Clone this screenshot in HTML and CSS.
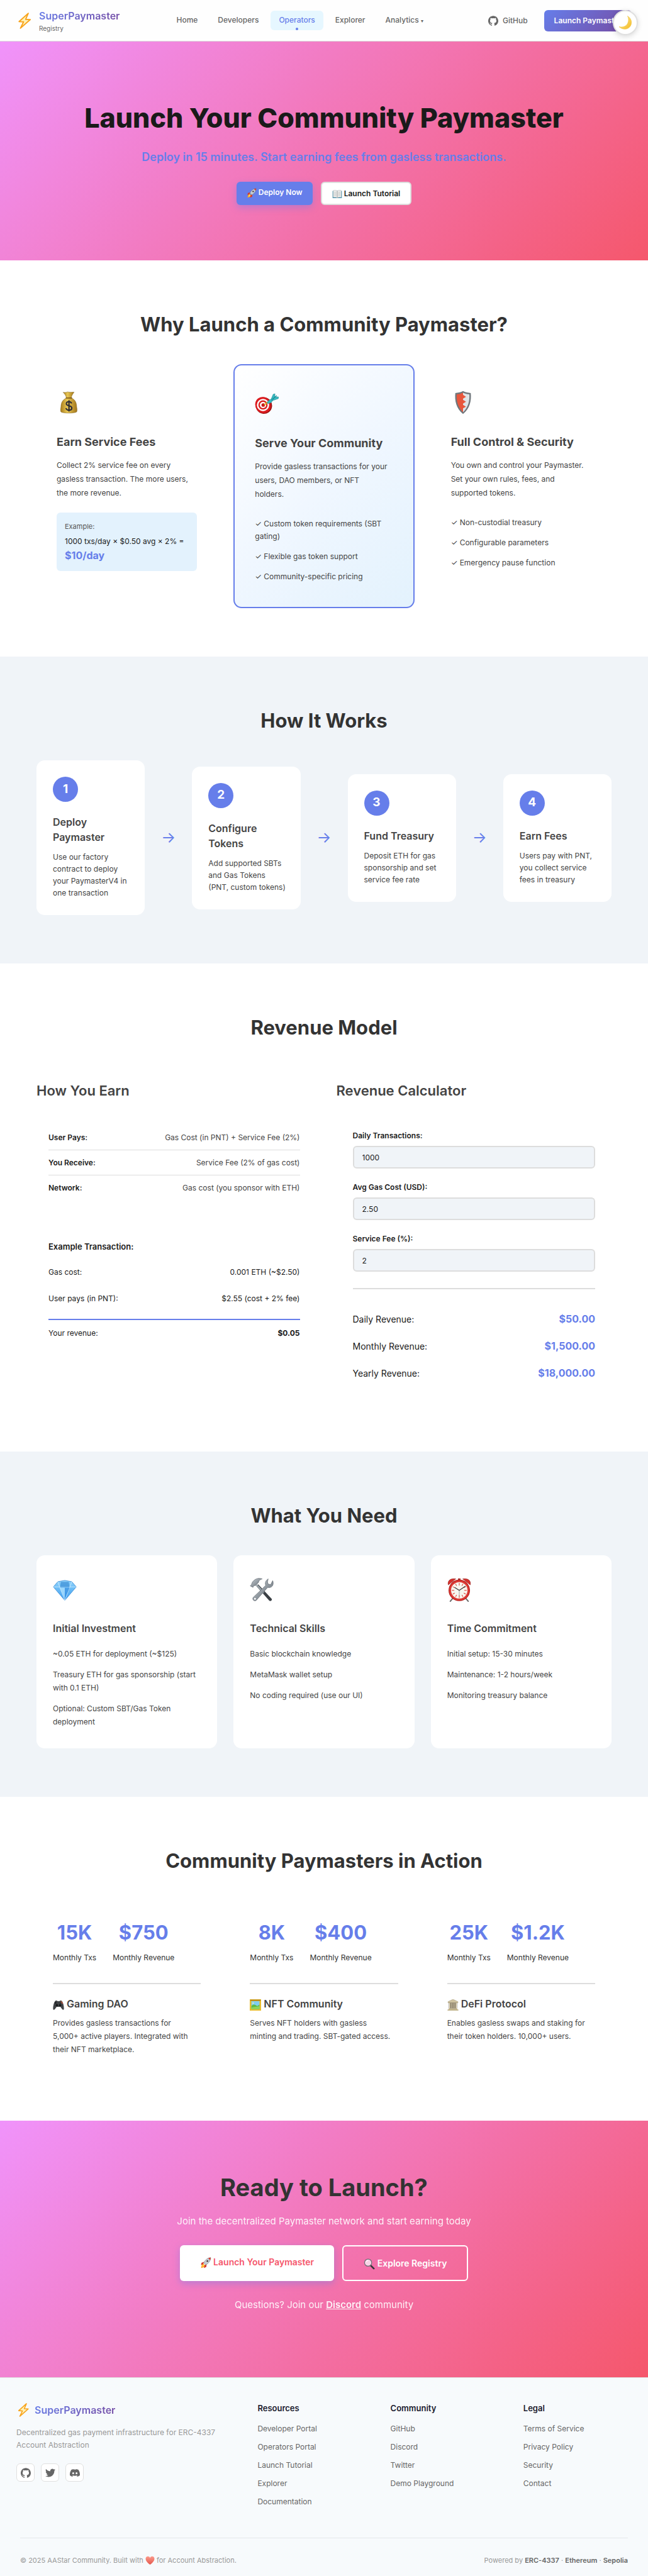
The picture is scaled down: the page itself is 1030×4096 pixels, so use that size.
FILE: index.html
```html
<!DOCTYPE html>
<html lang="en">
<head>
<meta charset="utf-8">
<meta name="viewport" content="width=device-width, initial-scale=1">
<title>SuperPaymaster Registry - Operators</title>
<link rel="stylesheet" href="styles.css">
</head>
<body>
<svg class="sprite" aria-hidden="true">
  <defs>
    <linearGradient id="g-bag" x1="0" y1="0" x2="1" y2="0"><stop offset="0" stop-color="#a87c1c"/><stop offset=".4" stop-color="#e8c653"/><stop offset="1" stop-color="#a3761a"/></linearGradient>
    <linearGradient id="g-steel" x1="0" y1="0" x2="1" y2="1"><stop offset="0" stop-color="#c9d0d6"/><stop offset="1" stop-color="#5d666e"/></linearGradient>
    <linearGradient id="g-gem" x1="0" y1="0" x2="0" y2="1"><stop offset="0" stop-color="#8fd3fb"/><stop offset="1" stop-color="#3d9df0"/></linearGradient>
    <linearGradient id="g-moon" x1="0" y1="0" x2="1" y2="1"><stop offset="0" stop-color="#fdf0a8"/><stop offset="1" stop-color="#f5b91f"/></linearGradient>
    <linearGradient id="g-heart" x1="0" y1="0" x2="0" y2="1"><stop offset="0" stop-color="#fb9a8c"/><stop offset="1" stop-color="#e4574c"/></linearGradient>
  </defs>
  <symbol id="bolt" viewBox="0 0 24 24"><path d="M17.5 1 4 13.2l6.6.4L6 23 20.500 10.200l-6.800-.3z" fill="#fff3b8" stroke="#f8a31b" stroke-width="1.700" stroke-linejoin="round"/></symbol>
  <symbol id="github" viewBox="0 0 24 24"><path fill="currentColor" d="M12 .297c-6.63 0-12 5.373-12 12 0 5.303 3.438 9.8 8.205 11.385.6.113.82-.258.82-.577 0-.285-.01-1.04-.015-2.04-3.338.724-4.042-1.61-4.042-1.61C4.422 18.07 3.633 17.7 3.633 17.7c-1.087-.744.084-.729.084-.729 1.205.084 1.838 1.236 1.838 1.236 1.07 1.835 2.809 1.305 3.495.998.108-.776.417-1.305.76-1.605-2.665-.3-5.466-1.332-5.466-5.93 0-1.31.465-2.38 1.235-3.22-.135-.303-.54-1.523.105-3.176 0 0 1.005-.322 3.3 1.23.96-.267 1.98-.399 3-.405 1.02.006 2.04.138 3 .405 2.28-1.552 3.285-1.23 3.285-1.23.645 1.653.24 2.873.12 3.176.765.84 1.23 1.91 1.23 3.22 0 4.61-2.805 5.625-5.475 5.92.42.36.81 1.096.81 2.22 0 1.606-.015 2.896-.015 3.286 0 .315.21.69.825.57C20.565 22.092 24 17.592 24 12.297c0-6.627-5.373-12-12-12"/></symbol>
  <symbol id="twitter" viewBox="0 0 24 24"><path fill="currentColor" d="M23.953 4.57a10 10 0 01-2.825.775 4.958 4.958 0 002.163-2.723c-.951.555-2.005.959-3.127 1.184a4.92 4.92 0 00-8.384 4.482C7.69 8.095 4.067 6.13 1.64 3.162a4.822 4.822 0 00-.666 2.475c0 1.71.87 3.213 2.188 4.096a4.904 4.904 0 01-2.228-.616v.06a4.923 4.923 0 003.946 4.827 4.996 4.996 0 01-2.212.085 4.936 4.936 0 004.604 3.417 9.867 9.867 0 01-6.102 2.105c-.39 0-.779-.023-1.17-.067a13.995 13.995 0 007.557 2.209c9.053 0 13.998-7.496 13.998-13.985 0-.21 0-.42-.015-.63A9.935 9.935 0 0024 4.59z"/></symbol>
  <symbol id="discord" viewBox="0 0 24 24"><path fill="currentColor" d="M20.317 4.37a19.791 19.791 0 0 0-4.885-1.515.074.074 0 0 0-.079.037c-.21.375-.444.864-.608 1.25a18.27 18.27 0 0 0-5.487 0 12.64 12.64 0 0 0-.617-1.25.077.077 0 0 0-.079-.037A19.736 19.736 0 0 0 3.677 4.37a.07.07 0 0 0-.032.027C.533 9.046-.32 13.58.099 18.057a.082.082 0 0 0 .031.057 19.9 19.9 0 0 0 5.993 3.03.078.078 0 0 0 .084-.028c.462-.63.874-1.295 1.226-1.994a.076.076 0 0 0-.041-.106 13.107 13.107 0 0 1-1.872-.892.077.077 0 0 1-.008-.128 10.2 10.2 0 0 0 .372-.292.074.074 0 0 1 .077-.01c3.928 1.793 8.18 1.793 12.062 0a.074.074 0 0 1 .078.01c.12.098.246.198.373.292a.077.077 0 0 1-.006.127 12.299 12.299 0 0 1-1.873.892.077.077 0 0 0-.041.107c.36.698.772 1.362 1.225 1.993a.076.076 0 0 0 .084.028 19.839 19.839 0 0 0 6.002-3.03.077.077 0 0 0 .032-.054c.5-5.177-.838-9.674-3.549-13.66a.061.061 0 0 0-.031-.03zM8.02 15.33c-1.183 0-2.157-1.085-2.157-2.419 0-1.333.956-2.419 2.157-2.419 1.21 0 2.176 1.096 2.157 2.42 0 1.333-.956 2.418-2.157 2.418zm7.975 0c-1.183 0-2.157-1.085-2.157-2.419 0-1.333.955-2.419 2.157-2.419 1.21 0 2.176 1.096 2.157 2.42 0 1.333-.946 2.418-2.157 2.418z"/></symbol>
  <symbol id="moon" viewBox="0 0 24 24"><path d="M15.500 1.500c6 3.500 8 10.500 4.500 16-3.800 6-12 6.500-18 1 6 1.500 11-.5 13.300-4.700 2.200-4 2.200-8.300.2-12.300z" fill="url(#g-moon)" stroke="#eec23a" stroke-width=".6"/></symbol>
  <symbol id="rocket" viewBox="0 0 24 24"><path d="M8 10 3 12l-1 5 5-2zM14 15l-1 6-5 2 1-6z" fill="#d63a2c"/><path d="M22.500 1c-6 .3-11 4-14.500 11l4 4.500C18.500 13 22.500 7 22.500 1z" fill="#c3ccd4" stroke="#68727b" stroke-width=".8"/><path d="M22.500 1c-1.800 0-3.600.4-5.200 1.200l3.900 4C22 4.500 22.500 2.800 22.500 1z" fill="#d63a2c"/><circle cx="15.500" cy="8.300" r="2.200" fill="#3d2b2b" stroke="#eef2f5" stroke-width=".8"/><path d="M7.500 14c-3 .5-4.500 4-5.500 9 4.500-1 7.500-2.800 8-5.500z" fill="#ff9d1c"/><path d="M7.500 15.500c-1.700.8-2.700 2.800-3.300 5.300 2.300-.8 4-2 4.300-4z" fill="#ffe35a"/></symbol>
  <symbol id="book" viewBox="0 0 24 24"><path d="M1 4h22v17H1z" fill="#3c8fae"/><path d="M2.500 3c4-1.200 7.500-.8 9.500 1 2-1.800 5.500-2.200 9.500-1v16.500c-4-1-7.500-.5-9.500 1.300-2-1.800-5.500-2.300-9.500-1.300z" fill="#f5f5f2" stroke="#8d9699" stroke-width=".7"/><path d="M12 4v16.500" stroke="#8b8f92" stroke-width="1.400"/><path d="M4.500 6.500c2-.5 4-.4 5.500.3M4.500 9.500c2-.5 4-.4 5.500.3M4.500 12.500c2-.5 4-.4 5.500.3M4.500 15.500c2-.5 4-.4 5.500.3M19.500 6.500c-2-.5-4-.4-5.500.3M19.500 9.500c-2-.5-4-.4-5.500.3M19.500 12.500c-2-.5-4-.4-5.500.3M19.500 15.500c-2-.5-4-.4-5.500.3" fill="none" stroke="#9ba0a3" stroke-width=".9"/></symbol>
  <symbol id="moneybag" viewBox="0 0 48 48"><path d="M13 3.500c4 .8 6 .2 9-.8 4 .8 8 .8 13 .6-3 4-5.500 8-5.500 12h-10c0-4-3-8.500-6.500-11.800z" fill="url(#g-bag)" stroke="#80601a" stroke-width=".7"/><path d="M19.500 15h10.500c6 3 10 7 10.300 18 .9 4.500 1 9-.3 10-4 3-27 3-31 0-1.300-1-1.200-5.500-.3-10C9 22 13.500 18 19.500 15z" fill="url(#g-bag)" stroke="#80601a" stroke-width=".7"/><path d="M19 15h11.500" stroke="#6f4a12" stroke-width="1.800" stroke-linecap="round"/><path d="M30 26c-.6-2.600-2.600-3.700-5.200-3.700-3 0-5.300 1.500-5.300 4.100 0 5.700 11 2.700 11 8.500 0 2.900-2.500 4.500-5.800 4.500-3 0-5.300-1.300-5.900-4.200M24.800 19.500v22.500" fill="none" stroke="#2c2a33" stroke-width="2.600"/></symbol>
  <symbol id="target" viewBox="0 0 48 48"><ellipse cx="18" cy="27.500" rx="16.500" ry="17" transform="rotate(-35 18 27.500)" fill="#9e1212"/><ellipse cx="16.500" cy="26.500" rx="15.300" ry="16.500" transform="rotate(-35 16.500 26.500)" fill="#dc1c20"/><circle cx="16.500" cy="26.500" r="12.300" fill="#fff"/><circle cx="16.500" cy="26.500" r="9.300" fill="#d8201f"/><circle cx="16.500" cy="26.500" r="6.300" fill="#fff"/><circle cx="17" cy="26.500" r="3.600" fill="#c9181a"/><path d="m19 26.500 7-6" stroke="#e2b21f" stroke-width="2.400"/><path d="M25 23c0-4 3-6 7-8l3-1 2 2-2 3c-2 3-5 5-10 4z" fill="#35bac2" stroke="#16848c" stroke-width=".7"/><path d="M33 14.500 37 5l3.500-1-.3 6 7.300.3-.3 3.200L39 16.500l-5 1z" fill="#35bac2" stroke="#16848c" stroke-width=".8"/><path d="m35 15.500 9-8" stroke="#16848c" stroke-width="1.400"/></symbol>
  <symbol id="shield" viewBox="0 0 48 48"><path d="M24 1c5 3 11 3.500 15.500 4C41 20 38 36 24 47 10 36 7 20 8.500 5 13 4.500 19 4 24 1z" fill="#70777c"/><path d="M24 4.500c4 2 8.500 2.700 12.700 3.200C37.500 21 34.500 34 24 43.500z" fill="#dfe4e7"/><path d="M24 4.500c-4 2-8.500 2.700-12.700 3.200C10.500 21 13.500 34 24 43.500z" fill="#e8573d"/><path d="m20 6 4-1.500v4l6 4-8 5 8 5-8 5 8 5-8 4 2 7z" fill="#e8573d"/></symbol>
  <symbol id="gem" viewBox="0 0 48 48"><path d="M10 7.500 24 5l14 2.500L47 18 24 45 1 18z" fill="url(#g-gem)" stroke="#3186d3" stroke-width="1"/><path d="M1 18h46M10 7.500 14 19l10 26 10-26 4-11.500" fill="none" stroke="#d4efff" stroke-width="1"/><path d="M16 8h16l1.500 10.500h-19z" fill="#3d8ed6" opacity=".7"/><path d="M14 20h10v22z" fill="#b4e4ff" opacity=".7"/><path d="M24 20h10L24 42z" fill="#2d87dd" opacity=".55"/></symbol>
  <symbol id="tools" viewBox="0 0 48 48"><path d="M17 13 44 42c1.500 3-2.500 6-5 3.500L13 16z" fill="#3a3f44"/><path d="M14 14 28 30" stroke="#9aa3aa" stroke-width="3.500"/><path d="M1 16c2-2 3-3 3.500-6C9 2 17-1 25 2c-4 1-7 3-7.500 7l-6 6.500c-2-1-4 0-5 3.500z" fill="url(#g-steel)" stroke="#555e66" stroke-width=".8"/><path d="M37 2c-5 3-7 8-5 13L7 39c-3 4 2 9 6 6l23-26c5 1.500 9-1 10.500-5 .8-3 .7-6-.5-8.500l-4 8-5.500-1.500-.8-4.500z" fill="url(#g-steel)" stroke="#555e66" stroke-width=".8"/><circle cx="10.500" cy="42" r="1.800" fill="#fff"/></symbol>
  <symbol id="clock" viewBox="0 0 48 48"><path d="m11 41-5 6M37 41l5 6" stroke="#6b6b6b" stroke-width="2.500" stroke-linecap="round"/><path d="M2 14C0 7 5 0 17 2zM46 14c2-7-3-14-15-12z" fill="#d7302c" stroke="#8f1715" stroke-width=".8"/><path d="M21.500 1h5v5h-5z" fill="#a33"/><circle cx="24" cy="25" r="21.500" fill="#b51f1c"/><circle cx="24" cy="25" r="20" fill="#dd3a35"/><circle cx="24" cy="25" r="16.500" fill="#f7f6ef"/><g stroke="#de3e35" stroke-width="1.300"><path d="M24 10v5M24 35v5M9 25h5M34 25h5M16.500 12l2.200 3.800M31.500 12l-2.200 3.800M16.500 38l2.200-3.800M31.500 38l-2.200-3.800M11 17.500l3.800 2.200M37 17.500l-3.800 2.200M11 32.500l3.800-2.200M37 32.500l-3.800-2.200"/></g><path d="m14.500 19 9.500 6 12.500-8.500" fill="none" stroke="#3b3b3b" stroke-width="1.600"/><path d="M24 25v12" stroke="#777" stroke-width=".8"/></symbol>
  <symbol id="gamepad" viewBox="0 0 24 24"><path d="M5 3.500c2-1.500 4-.3 5 .5h4c1-.8 3-2 5-.5 3 3 4.500 11 4.500 16 0 4-3 3-4.500.5L16 16H8l-3 4C3.500 22.500.5 23.500.5 19.500c0-5 1.500-13 4.500-16z" fill="#404346"/><circle cx="8.500" cy="12.500" r="2.500" fill="#17191b"/><circle cx="15.500" cy="12.500" r="2.500" fill="#17191b"/><circle cx="18" cy="5.500" r="1.200" fill="#e0602b"/><circle cx="20" cy="8" r="1.200" fill="#d64b35"/><circle cx="16" cy="8" r="1.200" fill="#222"/><path d="M4 7.500h4M6 5.500v4" stroke="#1b1d1f" stroke-width="1.400"/></symbol>
  <symbol id="frame" viewBox="0 0 24 24"><path d="M0 0h24v24H0z" fill="#e9bd2d"/><path d="M1 1h22v2H1z" fill="#a4761a"/><path d="M3.500 4h17v16.500h-17z" fill="#7fcdf0"/><path d="M3.500 14c4-4 8-3 10-1s4 1 7-2v9.500h-17z" fill="#5cb946"/><path d="M3.500 18c5-3 11-1 17-4v6.500h-17z" fill="#8ed45b"/><circle cx="7" cy="8" r="1.500" fill="#fff3a8"/></symbol>
  <symbol id="temple" viewBox="0 0 24 24"><path d="M12 0 1.500 5v2.500h21V5z" fill="#cfc3a1" stroke="#9a8d69" stroke-width=".6"/><path d="M3.500 7.500h17v12h-17z" fill="#463c2c"/><path d="M4 7.500h3v12H4zM8.500 7.500h2.700v12H8.500zM12.800 7.500h2.700v12h-2.700zM17 7.500h3v12h-3z" fill="#d9ceb0"/><path d="M2.500 19.500h19v2h-19zM.5 21.500h23V24H.5z" fill="#c2b48d"/></symbol>
  <symbol id="magnifier" viewBox="0 0 24 24"><path d="m14.500 14.500 7 7" stroke="#33363a" stroke-width="3.600" stroke-linecap="round"/><circle cx="9.500" cy="9" r="7.600" fill="#f8d3e6" stroke="#6a6e73" stroke-width="1.600"/><path d="M5 7.500c1-2 2.500-3 4.500-3" fill="none" stroke="#fff" stroke-width="1.400"/></symbol>
  <symbol id="heart" viewBox="0 0 24 24"><path d="M12 22.500C5 17 .8 12.500.8 7.500c0-7 8.700-8.300 11.200-2.300 2.500-6 11.200-4.700 11.200 2.300 0 5-4.200 9.500-11.200 15z" fill="url(#g-heart)"/></symbol>
</svg>

<header class="header">
  <a class="brand" href="#">
    <svg class="brand-icon" aria-hidden="true"><use href="#bolt"/></svg>
    <span class="brand-text"><span class="brand-name">SuperPaymaster</span><span class="brand-sub">Registry</span></span>
  </a>
  <nav class="nav" aria-label="Main">
    <a href="#">Home</a>
    <a href="#">Developers</a>
    <a class="active" href="#" aria-current="page">Operators</a>
    <a href="#">Explorer</a>
    <a href="#">Analytics <span class="caret">▾</span></a>
  </nav>
  <div class="header-actions">
    <a class="github-link" href="#"><svg class="icon-16" aria-hidden="true"><use href="#github"/></svg>GitHub</a>
    <a class="launch" href="#">Launch Paymaster</a>
  </div>
</header>
<button class="theme-toggle" type="button" aria-label="Switch to dark mode"><svg class="icon-24" aria-hidden="true"><use href="#moon"/></svg></button>

<main>
  <section class="hero">
    <h1>Launch Your Community Paymaster</h1>
    <p class="hero-sub">Deploy in 15 minutes. Start earning fees from gasless transactions.</p>
    <div class="button-row">
      <a class="btn btn-primary" href="#"><svg class="icon-16" aria-hidden="true"><use href="#rocket"/></svg> Deploy Now</a>
      <a class="btn btn-secondary" href="#"><svg class="icon-16" aria-hidden="true"><use href="#book"/></svg> Launch Tutorial</a>
    </div>
  </section>

  <section class="section">
    <h2>Why Launch a Community Paymaster?</h2>
    <div class="grid-3">
      <article class="benefit">
        <svg class="emoji" aria-hidden="true"><use href="#moneybag"/></svg>
        <h3>Earn Service Fees</h3>
        <p>Collect 2% service fee on every gasless transaction. The more users, the more revenue.</p>
        <div class="example">
          <div class="example-label">Example:</div>
          <div class="example-calc">1000 txs/day × $0.50 avg × 2% = <strong>$10/day</strong></div>
        </div>
      </article>
      <article class="benefit highlighted">
        <svg class="emoji" aria-hidden="true"><use href="#target"/></svg>
        <h3>Serve Your Community</h3>
        <p>Provide gasless transactions for your users, DAO members, or NFT<br>holders.</p>
        <ul>
          <li>✓ Custom token requirements (SBT gating)</li>
          <li>✓ Flexible gas token support</li>
          <li>✓ Community-specific pricing</li>
        </ul>
      </article>
      <article class="benefit">
        <svg class="emoji" aria-hidden="true"><use href="#shield"/></svg>
        <h3>Full Control &amp; Security</h3>
        <p>You own and control your Paymaster. Set your own rules, fees, and supported tokens.</p>
        <ul>
          <li>✓ Non-custodial treasury</li>
          <li>✓ Configurable parameters</li>
          <li>✓ Emergency pause function</li>
        </ul>
      </article>
    </div>
  </section>

  <section class="section tinted">
    <h2>How It Works</h2>
    <div class="steps">
      <article class="step">
        <div class="step-number">1</div>
        <h3>Deploy Paymaster</h3>
        <p>Use our factory contract to deploy your PaymasterV4 in one transaction</p>
      </article>
      <div class="arrow" aria-hidden="true">→</div>
      <article class="step">
        <div class="step-number">2</div>
        <h3>Configure Tokens</h3>
        <p>Add supported SBTs and Gas Tokens <span class="nowrap">(PNT, custom tokens)</span></p>
      </article>
      <div class="arrow" aria-hidden="true">→</div>
      <article class="step">
        <div class="step-number">3</div>
        <h3>Fund Treasury</h3>
        <p>Deposit ETH for gas sponsorship and set service fee rate</p>
      </article>
      <div class="arrow" aria-hidden="true">→</div>
      <article class="step">
        <div class="step-number">4</div>
        <h3>Earn Fees</h3>
        <p>Users pay with PNT, you collect service fees in treasury</p>
      </article>
    </div>
  </section>

  <section class="section">
    <h2>Revenue Model</h2>
    <div class="revenue">
      <div class="revenue-col">
        <h3>How You Earn</h3>
        <div class="panel panel-model">
          <div class="model-row"><strong>User Pays:</strong><span>Gas Cost (in PNT) + Service Fee (2%)</span></div>
          <div class="model-row"><strong>You Receive:</strong><span>Service Fee (2% of gas cost)</span></div>
          <div class="model-row"><strong>Network:</strong><span>Gas cost (you sponsor with ETH)</span></div>
        </div>
        <div class="panel panel-example">
          <h4>Example Transaction:</h4>
          <div class="tx-row"><span>Gas cost:</span><span>0.001 ETH (~$2.50)</span></div>
          <div class="tx-row"><span>User pays (in PNT):</span><span>$2.55 (cost + 2% fee)</span></div>
          <div class="tx-row total"><span>Your revenue:</span><strong>$0.05</strong></div>
        </div>
      </div>
      <div class="revenue-col">
        <h3>Revenue Calculator</h3>
        <form class="calculator">
          <div class="field"><label for="daily">Daily Transactions:</label><input id="daily" type="number" value="1000"></div>
          <div class="field"><label for="gas">Avg Gas Cost (USD):</label><input id="gas" type="number" step="0.01" value="2.50"></div>
          <div class="field"><label for="fee">Service Fee (%):</label><input id="fee" type="number" value="2"></div>
          <div class="results">
            <div class="result"><span>Daily Revenue:</span><output>$50.00</output></div>
            <div class="result"><span>Monthly Revenue:</span><output>$1,500.00</output></div>
            <div class="result"><span>Yearly Revenue:</span><output>$18,000.00</output></div>
          </div>
        </form>
      </div>
    </div>
  </section>

  <section class="section tinted">
    <h2>What You Need</h2>
    <div class="grid-3">
      <article class="need">
        <svg class="emoji" aria-hidden="true"><use href="#gem"/></svg>
        <h3>Initial Investment</h3>
        <ul>
          <li>~0.05 ETH for deployment (~$125)</li>
          <li>Treasury ETH for gas sponsorship (start with 0.1 ETH)</li>
          <li>Optional: Custom SBT/Gas Token deployment</li>
        </ul>
      </article>
      <article class="need">
        <svg class="emoji" aria-hidden="true"><use href="#tools"/></svg>
        <h3>Technical Skills</h3>
        <ul>
          <li>Basic blockchain knowledge</li>
          <li>MetaMask wallet setup</li>
          <li>No coding required (use our UI)</li>
        </ul>
      </article>
      <article class="need">
        <svg class="emoji" aria-hidden="true"><use href="#clock"/></svg>
        <h3>Time Commitment</h3>
        <ul>
          <li>Initial setup: 15-30 minutes</li>
          <li>Maintenance: 1-2 hours/week</li>
          <li>Monitoring treasury balance</li>
        </ul>
      </article>
    </div>
  </section>

  <section class="section">
    <h2>Community Paymasters in Action</h2>
    <div class="grid-3">
      <article class="story">
        <div class="stats">
          <div class="stat"><div class="stat-value">15K</div><div class="stat-label">Monthly Txs</div></div>
          <div class="stat"><div class="stat-value">$750</div><div class="stat-label">Monthly Revenue</div></div>
        </div>
        <h3><svg class="icon-18" aria-hidden="true"><use href="#gamepad"/></svg> Gaming DAO</h3>
        <p>Provides gasless transactions for 5,000+&nbsp;active players. Integrated with their NFT marketplace.</p>
      </article>
      <article class="story">
        <div class="stats">
          <div class="stat"><div class="stat-value">8K</div><div class="stat-label">Monthly Txs</div></div>
          <div class="stat"><div class="stat-value">$400</div><div class="stat-label">Monthly Revenue</div></div>
        </div>
        <h3><svg class="icon-18" aria-hidden="true"><use href="#frame"/></svg> NFT Community</h3>
        <p>Serves NFT holders with gasless minting&nbsp;and trading. SBT-gated access.</p>
      </article>
      <article class="story">
        <div class="stats">
          <div class="stat"><div class="stat-value">25K</div><div class="stat-label">Monthly Txs</div></div>
          <div class="stat"><div class="stat-value">$1.2K</div><div class="stat-label">Monthly Revenue</div></div>
        </div>
        <h3><svg class="icon-18" aria-hidden="true"><use href="#temple"/></svg> DeFi Protocol</h3>
        <p>Enables gasless swaps and staking for their token holders. 10,000+ users.</p>
      </article>
    </div>
  </section>

  <section class="cta">
    <h2>Ready to Launch?</h2>
    <p>Join the decentralized Paymaster network and start earning today</p>
    <div class="button-row">
      <a class="btn btn-large btn-white" href="#"><svg class="icon-18" aria-hidden="true"><use href="#rocket"/></svg> Launch Your Paymaster</a>
      <a class="btn btn-large btn-outline" href="#"><svg class="icon-18" aria-hidden="true"><use href="#magnifier"/></svg> Explore Registry</a>
    </div>
    <p>Questions? Join our <a href="#">Discord</a> community</p>
  </section>
</main>

<footer class="footer">
  <div class="footer-grid">
    <div>
      <div class="footer-brand"><svg class="footer-bolt" aria-hidden="true"><use href="#bolt"/></svg><span class="brand-name">SuperPaymaster</span></div>
      <p class="footer-desc">Decentralized gas payment infrastructure for ERC-4337 Account Abstraction</p>
      <div class="socials">
        <a href="#" aria-label="GitHub"><svg class="icon-16" aria-hidden="true"><use href="#github"/></svg></a>
        <a href="#" aria-label="Twitter"><svg class="icon-16" aria-hidden="true"><use href="#twitter"/></svg></a>
        <a href="#" aria-label="Discord"><svg class="icon-16" aria-hidden="true"><use href="#discord"/></svg></a>
      </div>
    </div>
    <div class="footer-links">
      <h4>Resources</h4>
      <ul><li><a href="#">Developer Portal</a></li><li><a href="#">Operators Portal</a></li><li><a href="#">Launch Tutorial</a></li><li><a href="#">Explorer</a></li><li><a href="#">Documentation</a></li></ul>
    </div>
    <div class="footer-links">
      <h4>Community</h4>
      <ul><li><a href="#">GitHub</a></li><li><a href="#">Discord</a></li><li><a href="#">Twitter</a></li><li><a href="#">Demo Playground</a></li></ul>
    </div>
    <div class="footer-links">
      <h4>Legal</h4>
      <ul><li><a href="#">Terms of Service</a></li><li><a href="#">Privacy Policy</a></li><li><a href="#">Security</a></li><li><a href="#">Contact</a></li></ul>
    </div>
  </div>
  <div class="footer-bottom">
    <span>© 2025 AAStar Community. Built with <svg class="heart" aria-hidden="true"><use href="#heart"/></svg> for Account Abstraction.</span>
    <span>Powered by <a href="#">ERC-4337</a> · <a href="#">Ethereum</a> · <a href="#">Sepolia</a></span>
  </div>
</footer>
</body>
</html>
```
FILE: styles.css
```css
* { box-sizing: border-box; }

body {
  margin: 0;
  font-family: Inter, "Liberation Sans", sans-serif;
  font-size: 13px;
  line-height: 1.5;
  color: #1a1a1a;
  background: #fff;
}

h1, h2, h3, h4, p, ul { margin: 0; padding: 0; }
ul { list-style: none; }
a { color: inherit; text-decoration: none; }

.sprite { position: absolute; width: 0; height: 0; }
.icon-16 { width: 16px; height: 16px; }
.icon-18 { width: 18px; height: 18px; }
.icon-24 { width: 24px; height: 24px; }
.nowrap { white-space: nowrap; }

/* Header */
.header {
  display: flex;
  align-items: center;
  justify-content: space-between;
  height: 66px;
  padding: 0 26px;
  background: #fefefe;
  border-bottom: 1px solid #ddd;
}
.brand { display: flex; align-items: center; gap: 10px; }
.brand-icon { width: 26px; height: 26px; }
.brand-text { display: flex; flex-direction: column; }
.brand-name {
  font-size: 16px;
  line-height: 24px;
  font-weight: 600;
  color: transparent;
  background: linear-gradient(135deg, #667eea, #764ba2);
  background-clip: text;
}
.brand-sub { font-size: 10px; line-height: 16px; color: #666; }

.nav { display: flex; gap: 6px; }
.nav a {
  position: relative;
  padding: 6px 13px;
  font-size: 12px;
  line-height: 18px;
  font-weight: 500;
  color: #666;
  border-radius: 6px;
}
.nav .active { color: #667eea; background: #e6f7ff; }
.nav .active::after {
  content: "";
  position: absolute;
  left: 50%;
  bottom: 0;
  width: 4px;
  height: 4px;
  margin-left: -2px;
  border-radius: 50%;
  background: #667eea;
}
.caret { font-size: 8px; }

.header-actions { display: flex; align-items: center; gap: 13px; }
.github-link { display: flex; align-items: center; gap: 7px; padding: 6px 13px; font-size: 12px; font-weight: 500; color: #666; }
.launch {
  padding: 8px 16px;
  font-size: 12px;
  line-height: 18px;
  font-weight: 600;
  color: #fff;
  background: linear-gradient(135deg, #667eea, #764ba2);
  border-radius: 6px;
}
.theme-toggle {
  position: fixed;
  top: 16px;
  right: 16px;
  z-index: 10;
  display: grid;
  place-items: center;
  width: 40px;
  height: 40px;
  padding: 0;
  border: 2px solid #e0e0e0;
  border-radius: 50%;
  background: #fff;
  box-shadow: 0 2px 8px rgba(0, 0, 0, .15);
}

/* Buttons */
.button-row { display: flex; justify-content: center; gap: 13px; }
.btn {
  padding: 8px 16px;
  font-size: 12px;
  line-height: 17px;
  font-weight: 600;
  border-radius: 6px;
}
.btn svg { margin: -2px 0; vertical-align: -3px; }
.btn-primary { color: #fff; background: #667eea; box-shadow: 0 4px 12px rgba(102, 126, 234, .4); }
.btn-secondary { border: 2px solid #ddd; background: #fff; }
.btn-large { padding: 18px 32px; font-size: 14px; }
.btn-white { color: #f5576c; background: #fff; box-shadow: 0 4px 12px rgba(102, 126, 234, .4); }
.btn-outline { color: #fff; border: 2px solid #fff; }

/* Hero */
.hero {
  padding: 88px 26px;
  text-align: center;
  background: linear-gradient(135deg, #f093fb, #f5576c);
}
.hero h1 { font-size: 43px; line-height: 67px; font-weight: 800; margin-bottom: 14px; }
.hero-sub { margin-bottom: 25px; font-size: 18px; line-height: 29px; font-weight: 600; color: #667eea; }

/* Sections */
.section { padding: 77px 58px; }
.tinted { background: #f0f4f8; }
.section h2 {
  margin-bottom: 38px;
  font-size: 31px;
  line-height: 50px;
  font-weight: 700;
  text-align: center;
  color: #333;
}
h3 { color: #444; font-weight: 600; }
.grid-3 { display: grid; grid-template-columns: repeat(3, 1fr); gap: 26px; }
.emoji { display: block; width: 38px; height: 38px; margin: 10px 0 30px; }

/* Benefits */
.benefit { padding: 32px; border-radius: 13px; }
.benefit h3 { margin-bottom: 13px; font-size: 18px; line-height: 27px; font-weight: 700; }
.benefit p { margin-bottom: 20px; font-size: 12px; line-height: 22px; color: #444; }
.benefit li { padding: 6px 0; font-size: 12px; line-height: 20px; color: #444; }
.highlighted { border: 2px solid #667eea; background: linear-gradient(135deg, #fff, #f0f7ff 50%, #e3f2fd); }
.example { padding: 13px; border-radius: 6px; background: #e3f2fd; }
.example-label { margin-bottom: 3px; font-size: 11px; line-height: 18px; color: #555; }
.example-calc { font-size: 12px; line-height: 23px; }
.example strong { display: block; font-size: 16px; font-weight: 700; color: #667eea; }

/* Steps */
.steps { display: flex; align-items: center; }
.step { flex: 1; min-width: 0; padding: 26px; border-radius: 13px; background: #fff; }
.step-number {
  display: grid;
  place-items: center;
  width: 40px;
  height: 40px;
  margin-bottom: 20px;
  border-radius: 50%;
  font-size: 19px;
  font-weight: 700;
  color: #fff;
  background: #667eea;
}
.step h3 { margin-bottom: 10px; font-size: 16px; line-height: 24px; }
.step p { font-size: 12px; line-height: 19px; color: #444; }
.arrow { width: 75px; text-align: center; font-size: 24px; color: #667eea; }

/* Revenue */
.revenue { display: grid; grid-template-columns: 1fr 1fr; gap: 39px; }
.revenue h3 { margin: 21px 0 20px; font-size: 22px; line-height: 32px; }
.panel { padding: 19px; }
.panel-model { margin-bottom: 26px; }
.model-row {
  display: flex;
  justify-content: space-between;
  padding: 10px 0;
  font-size: 12px;
  line-height: 19px;
  border-bottom: 1px solid #ddd;
}
.model-row:last-child { border-bottom: 0; }
.model-row strong { font-weight: 600; }
.model-row span { color: #444; }
.panel-example h4 { margin-bottom: 10px; font-size: 13px; line-height: 20px; font-weight: 600; }
.tx-row { display: flex; justify-content: space-between; padding: 11px 0; font-size: 12px; line-height: 20px; }
.total { margin-top: 11px; border-top: 2px solid #667eea; }
.calculator { padding: 26px; }
.field { margin-bottom: 20px; }
.field label { display: block; margin-bottom: 6px; font-size: 12px; line-height: 20px; font-weight: 600; }
.field input {
  display: block;
  width: 100%;
  height: 36px;
  padding: 0 13px;
  font: inherit;
  font-size: 12px;
  color: #1a1a1a;
  border: 2px solid #ddd;
  border-radius: 6px;
  background: #f0f4f8;
  appearance: textfield;
}
.results { margin-top: 26px; padding-top: 26px; border-top: 2px solid #ddd; }
.result { display: flex; justify-content: space-between; align-items: center; padding: 9px 0; font-size: 14px; line-height: 25px; }
.result output { font-size: 16px; font-weight: 700; color: #667eea; }

/* Requirements */
.need { padding: 26px; border-radius: 13px; background: #fff; }
.need h3 { margin-bottom: 12px; font-size: 16px; line-height: 24px; }
.need li { padding: 6px 0; font-size: 12px; line-height: 21px; color: #444; }

/* Stories */
.story { padding: 26px; }
.stats { display: flex; gap: 26px; margin-bottom: 19px; padding-bottom: 30px; border-bottom: 2px solid #ddd; }
.stat { text-align: center; }
.stat-value { font-size: 31px; line-height: 49px; font-weight: 700; color: #667eea; }
.stat-label { margin-top: 6px; font-size: 12px; line-height: 20px; color: #333; }
.story h3 { margin-bottom: 8px; font-size: 16px; line-height: 24px; }
.story h3 svg { margin: -2px 0; vertical-align: -3px; }
.story p { font-size: 12px; line-height: 21px; color: #444; }

/* Call to action */
.cta {
  padding: 77px 26px 102px;
  text-align: center;
  color: #fff;
  background: linear-gradient(135deg, #f093fb, #f5576c);
}
.cta h2 { margin-bottom: 12px; font-size: 38px; line-height: 58px; font-weight: 700; color: #333; }
.cta p { font-size: 15px; line-height: 26px; opacity: .9; }
.cta .button-row { margin: 25px 0; }
.cta p a { font-weight: 600; text-decoration: underline; }

/* Footer */
.footer { padding: 38px 26px 17px; background: #f7fafc; border-top: 1px solid #e0e0e0; }
.footer-grid { display: grid; grid-template-columns: 2fr 1fr 1fr 1fr; gap: 39px; }
.footer-brand { display: flex; align-items: center; gap: 7px; margin-bottom: 13px; }
.footer-bolt { width: 22px; height: 26px; }
.footer-desc { margin-bottom: 19px; font-size: 12px; line-height: 20px; color: #999; }
.socials { display: flex; gap: 10px; }
.socials a {
  display: grid;
  place-items: center;
  width: 29px;
  height: 29px;
  color: #666;
  border: 1px solid #e0e0e0;
  border-radius: 6px;
  background: #fff;
}
.footer-links h4 { margin-bottom: 13px; font-size: 13px; line-height: 20px; font-weight: 600; color: #1a1a2e; }
.footer-links li { margin-bottom: 9px; font-size: 12px; line-height: 20px; color: #666; }
.footer-bottom {
  display: flex;
  justify-content: space-between;
  margin: 38px 6px 0;
  padding-top: 26px;
  border-top: 1px solid #e5e8eb;
  font-size: 11px;
  line-height: 18px;
  color: #999;
}
.footer-bottom a { font-weight: 600; color: #666; }
.heart { width: 15px; height: 15px; vertical-align: -4px; }
```
